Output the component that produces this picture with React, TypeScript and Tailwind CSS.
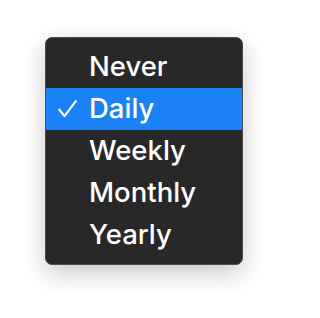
const OPTIONS = ["Never", "Daily", "Weekly", "Monthly", "Yearly"];

export default function App() {
  const selected = "Daily";
  return (
    <div className="flex h-[318px] w-[288px] items-start justify-start bg-white font-['Inter',sans-serif]">
      <div className="ml-[45px] mt-[37px] w-[198px] rounded-[7px] border border-[#4a4a4a] bg-[#282828] py-[8px] shadow-[0_8px_26px_rgba(0,0,0,0.22)]">
        <ul>
          {OPTIONS.map((o) => (
            <li
              key={o}
              className={`flex h-[42px] items-center text-[27.5px] font-[460] text-white ${
                o === selected ? "bg-[#1b81f7]" : ""
              }`}
            >
              <span className="flex w-[43px] justify-start pl-[12px]">
                {o === selected && (
                  <svg width="19" height="18" viewBox="0 0 19 18" fill="none">
                    <path d="M1.2 9.5 L6.5 16.2 L17.8 1.2" stroke="white" strokeWidth="2.1" strokeLinecap="round" strokeLinejoin="round" />
                  </svg>
                )}
              </span>
              <span>{o}</span>
            </li>
          ))}
        </ul>
      </div>
    </div>
  );
}
